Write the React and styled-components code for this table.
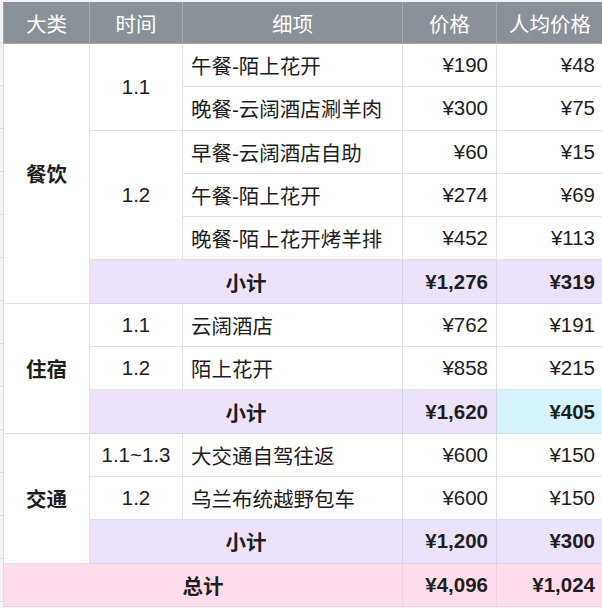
import React from 'react';
import styled, { createGlobalStyle } from 'styled-components';

const GlobalStyle = createGlobalStyle`
  html, body {
    margin: 0;
    padding: 0;
    background: #ffffff;
    overflow: hidden;
  }
  body {
    font-family: "Liberation Sans", "Noto Sans CJK SC", sans-serif;
  }
`;

const Sheet = styled.div`
  width: 602px;
  height: 608px;
  overflow: hidden;
  padding: 2px 0 0 3px;
  box-sizing: border-box;
  background-color: #f4f4f6;
  background-image: repeating-linear-gradient(
    to bottom,
    transparent 0,
    transparent 42px,
    #dcdce0 42px,
    #dcdce0 43px
  );
`;

const Table = styled.table`
  border-collapse: collapse;
  table-layout: fixed;
  width: 600px;
  background: #ffffff;
  border-left: 1px solid #c9c9ce;
  font-size: 20.5px;
  color: #1e1e1e;
`;

const HeadCell = styled.th`
  height: 41px;
  padding: 0 8px;
  background: #8a9199;
  color: #ffffff;
  font-weight: 400;
  text-align: center;
  border: 1px solid #a2a8ae;
  border-top: none;
  white-space: nowrap;
`;

const bgFor = {
  plain: '#ffffff',
  sub: '#ece3fb',
  hi: '#d4f3fb',
  total: '#fedcec',
};

const lineFor = {
  plain: '#e3e3e6',
  sub: '#dad2e6',
  hi: '#d3dfe8',
  total: '#ead4de',
};

const Cell = styled.td`
  height: 42.3px;
  padding: 0 8px;
  text-align: ${(p) => p.$align || 'left'};
  font-weight: ${(p) => (p.$bold ? 700 : 400)};
  background: ${(p) => bgFor[p.$tone || 'plain']};
  border: 1px solid ${(p) => lineFor[p.$tone || 'plain']};
  white-space: nowrap;
`;

const sections = [
  {
    name: '餐饮',
    days: [
      {
        date: '1.1',
        items: [
          ['午餐-陌上花开', '¥190', '¥48'],
          ['晚餐-云阔酒店涮羊肉', '¥300', '¥75'],
        ],
      },
      {
        date: '1.2',
        items: [
          ['早餐-云阔酒店自助', '¥60', '¥15'],
          ['午餐-陌上花开', '¥274', '¥69'],
          ['晚餐-陌上花开烤羊排', '¥452', '¥113'],
        ],
      },
    ],
    subtotal: ['¥1,276', '¥319'],
  },
  {
    name: '住宿',
    days: [
      { date: '1.1', items: [['云阔酒店', '¥762', '¥191']] },
      { date: '1.2', items: [['陌上花开', '¥858', '¥215']] },
    ],
    subtotal: ['¥1,620', '¥405'],
    highlight: true,
  },
  {
    name: '交通',
    days: [
      { date: '1.1~1.3', items: [['大交通自驾往返', '¥600', '¥150']] },
      { date: '1.2', items: [['乌兰布统越野包车', '¥600', '¥150']] },
    ],
    subtotal: ['¥1,200', '¥300'],
  },
];

function Section({ section }) {
  const count = section.days.reduce((n, d) => n + d.items.length, 0) + 1;
  const rows = [];
  section.days.forEach((day, di) => {
    day.items.forEach((item, ii) => {
      rows.push(
        <tr key={`${di}-${ii}`}>
          {di === 0 && ii === 0 && (
            <Cell rowSpan={count} $align="center" $bold>
              {section.name}
            </Cell>
          )}
          {ii === 0 && (
            <Cell rowSpan={day.items.length} $align="center">
              {day.date}
            </Cell>
          )}
          <Cell>{item[0]}</Cell>
          <Cell $align="right">{item[1]}</Cell>
          <Cell $align="right">{item[2]}</Cell>
        </tr>
      );
    });
  });
  rows.push(
    <tr key="sub">
      <Cell colSpan={2} $align="center" $bold $tone="sub">
        小计
      </Cell>
      <Cell $align="right" $bold $tone="sub">
        {section.subtotal[0]}
      </Cell>
      <Cell $align="right" $bold $tone={section.highlight ? 'hi' : 'sub'}>
        {section.subtotal[1]}
      </Cell>
    </tr>
  );
  return rows;
}

export default function App() {
  return (
    <Sheet>
      <GlobalStyle />
      <Table>
        <colgroup>
          <col style={{ width: 86 }} />
          <col style={{ width: 93 }} />
          <col style={{ width: 220 }} />
          <col style={{ width: 94 }} />
          <col style={{ width: 107 }} />
        </colgroup>
        <thead>
          <tr>
            <HeadCell>大类</HeadCell>
            <HeadCell>时间</HeadCell>
            <HeadCell>细项</HeadCell>
            <HeadCell>价格</HeadCell>
            <HeadCell>人均价格</HeadCell>
          </tr>
        </thead>
        <tbody>
          {sections.map((s) => (
            <Section key={s.name} section={s} />
          ))}
          <tr>
            <Cell colSpan={3} $align="center" $bold $tone="total">
              总计
            </Cell>
            <Cell $align="right" $bold $tone="total">
              ¥4,096
            </Cell>
            <Cell $align="right" $bold $tone="total">
              ¥1,024
            </Cell>
          </tr>
        </tbody>
      </Table>
    </Sheet>
  );
}
